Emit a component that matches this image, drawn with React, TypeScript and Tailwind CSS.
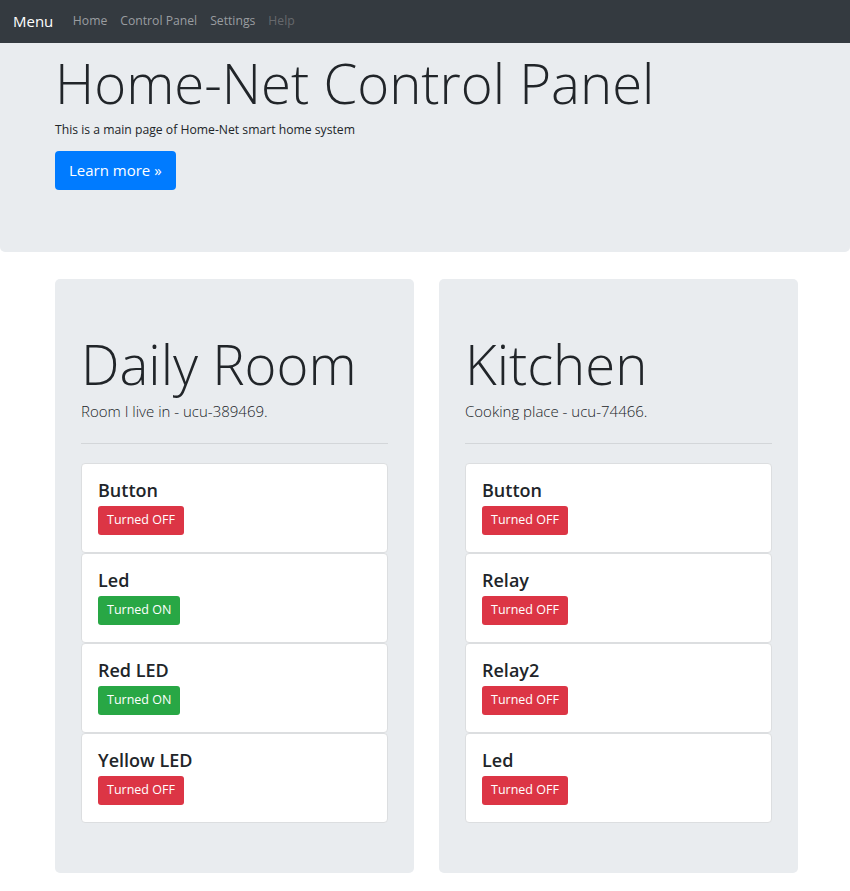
import React from "react";

const font = { fontFamily: '"Segoe UI", "Open Sans", "Noto Sans", sans-serif' };

type Dev = { name: string; on: boolean };

const rooms: { title: string; sub: string; devices: Dev[] }[] = [
  {
    title: "Daily Room",
    sub: "Room I live in - ucu-389469.",
    devices: [
      { name: "Button", on: false },
      { name: "Led", on: true },
      { name: "Red LED", on: true },
      { name: "Yellow LED", on: false },
    ],
  },
  {
    title: "Kitchen",
    sub: "Cooking place - ucu-74466.",
    devices: [
      { name: "Button", on: false },
      { name: "Relay", on: false },
      { name: "Relay2", on: false },
      { name: "Led", on: false },
    ],
  },
];

function DeviceCard({ d }: { d: Dev }) {
  return (
    <div className="h-[90px] bg-white border border-[#dcdee0] rounded-[4px] px-[16px] pt-[15px]">
      <div className="text-[18px] leading-[23px] font-semibold text-[#212529] mb-[4px]">{d.name}</div>
      <div
        className={
          "inline-flex items-center h-[29px] px-[9px] rounded-[3px] text-[12.5px] text-white " +
          (d.on ? "bg-[#28a745]" : "bg-[#dc3545]")
        }
      >
        {d.on ? "Turned ON" : "Turned OFF"}
      </div>
    </div>
  );
}

export default function App() {
  return (
    <div className="min-h-[891px] bg-white text-[#212529]" style={font}>
      <nav className="h-[43px] bg-[#343a40] flex items-center px-[13px]">
        <span className="text-white text-[15px] mr-[13px]">Menu</span>
        <span className="text-[12.2px] text-[#9a9da0] px-[6.5px]">Home</span>
        <span className="text-[12.2px] text-[#9a9da0] px-[6.5px]">Control Panel</span>
        <span className="text-[12.2px] text-[#9a9da0] px-[6.5px]">Settings</span>
        <span className="text-[12.2px] text-[#67696d] px-[6.5px]">Help</span>
      </nav>
      <div className="h-[209px] bg-[#e9ecef] rounded-b-[5px] pl-[55px] pt-[9px]">
        <h1 className="text-[54.5px] leading-[62px] font-light text-[#212529]">Home-Net Control Panel</h1>
        <p className="text-[12.2px] leading-[18px] mt-[7px]">This is a main page of Home-Net smart home system</p>
        <div className="inline-flex items-center h-[39px] px-[14px] mt-[12px] rounded-[4px] bg-[#007bff] text-white text-[15px]">
          Learn more »
        </div>
      </div>
      <div className="ml-[55px] w-[743px] mt-[27px] grid grid-cols-2 gap-[25px]">
        {rooms.map((r) => (
          <div key={r.title} className="h-[594px] bg-[#e9ecef] rounded-[5px] px-[26px] pt-[54px]">
            <h2 className="text-[54.5px] leading-[62px] font-light text-[#212529]">{r.title}</h2>
            <p className="text-[15px] leading-[20px] font-light mt-[6px]">{r.sub}</p>
            <div className="h-px bg-[#d3d6d9] mt-[22px] mb-[19px]" />
            <div className="flex flex-col">
              {r.devices.map((d, i) => (
                <DeviceCard key={i} d={d} />
              ))}
            </div>
          </div>
        ))}
      </div>
    </div>
  );
}
